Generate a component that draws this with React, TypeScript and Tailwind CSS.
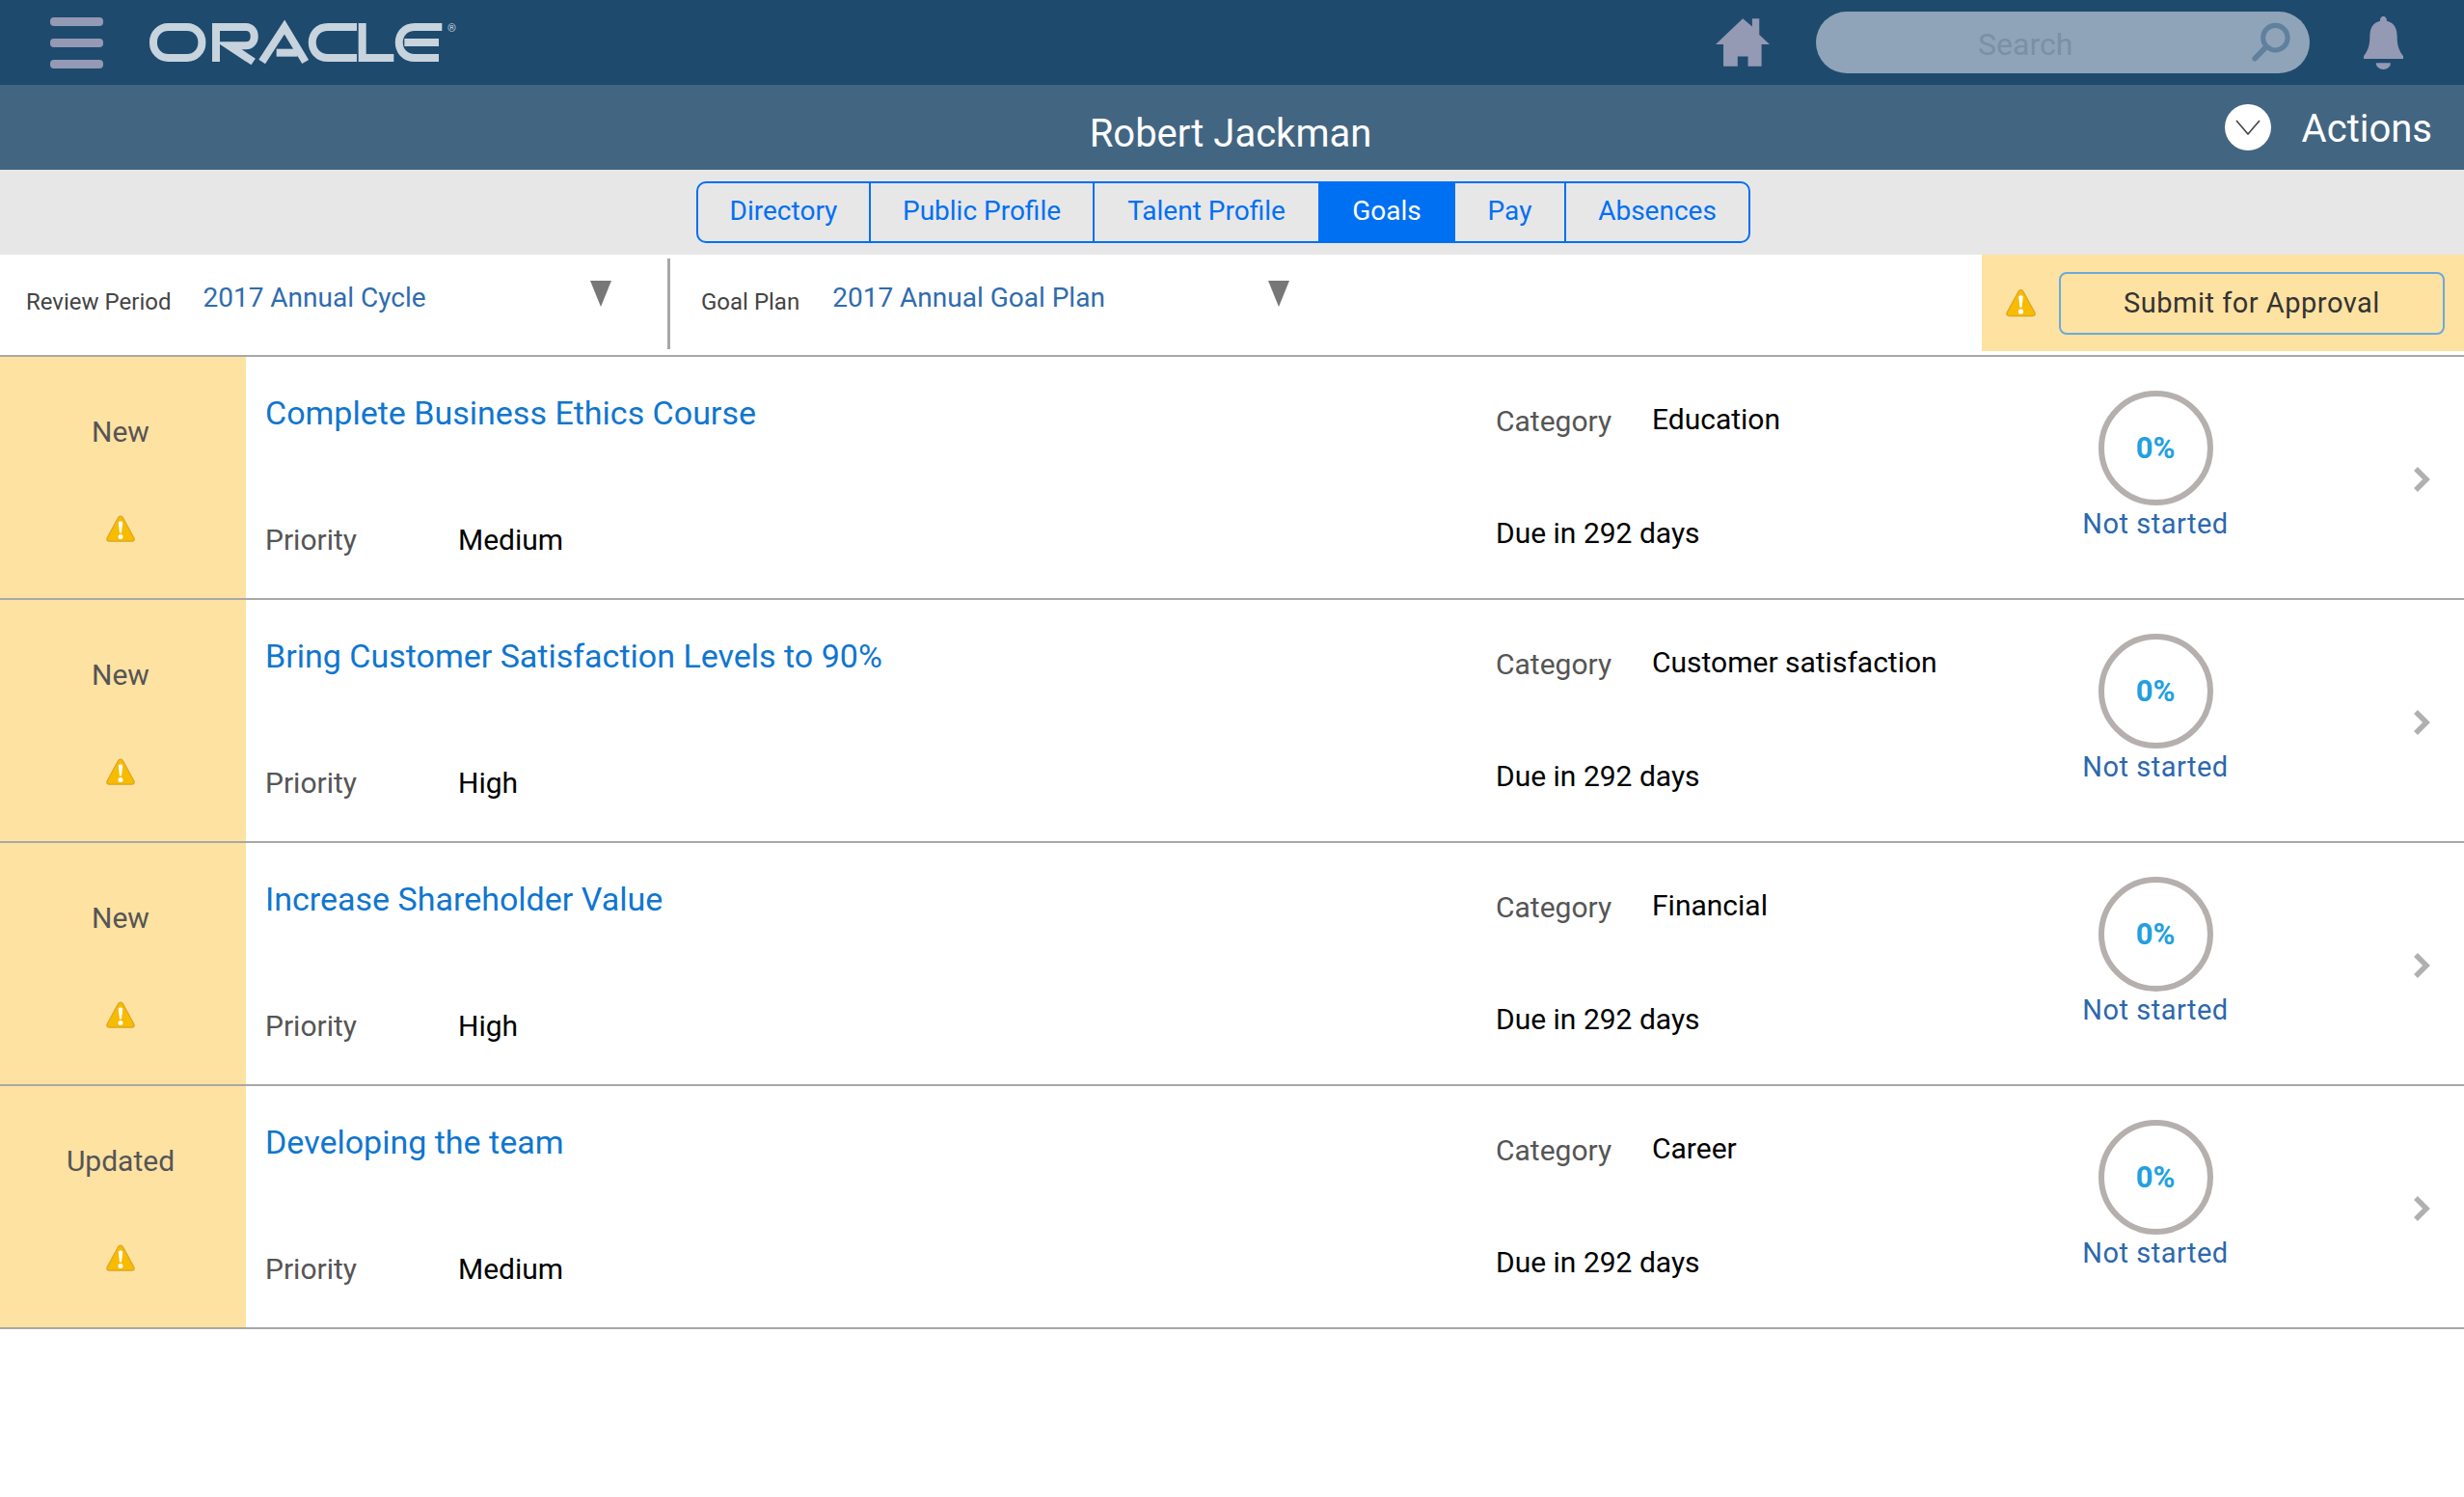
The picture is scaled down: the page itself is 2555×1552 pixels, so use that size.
import React from "react";

const Warning = ({ className }: { className: string }) => (
  <svg viewBox="0 0 30 28" className={className}>
    <path d="M15 1 C16.2 1 17 1.6 17.5 2.8 L28.8 23.5 C29.8 25.6 28.8 27.2 26.6 27.2 H3.4 C1.2 27.2 0.2 25.6 1.2 23.5 L12.5 2.8 C13 1.6 13.8 1 15 1 Z" fill="#f7bb00" stroke="#d9a62a" strokeWidth="1.2" />
    <path d="M12.8 8 C12.8 6 17.2 6 17.2 8 L16 18.5 H14 Z" fill="#ffffff" />
    <circle cx="15" cy="22.6" r="2.5" fill="#ffffff" />
  </svg>
);

const Triangle = () => (
  <svg viewBox="0 0 22 27" className="w-[22px] h-[27px]">
    <path d="M0 0 H22 L11 27 Z" fill="#777777" />
  </svg>
);

const OracleLogo = () => (
  <svg viewBox="45 15 960 150" className="w-[320px] h-[50px]" fill="none" stroke="#c7d3dd" strokeWidth="24" role="img" aria-label="Oracle">
    <rect x="57" y="42" width="151" height="96" rx="46" />
    <path d="M252 150 V42 H345 C380 42 380 100 345 100 H292 L368 150" />
    <path d="M395 150 L465 42 L530 150" strokeLinejoin="miter" />
    <path d="M440 122 H505" />
    <path d="M690 42 H600 C535 42 535 138 600 138 H690" />
    <path d="M707 30 V138 H805" />
    <path d="M955 42 H870 C805 42 805 138 870 138 H945" />
    <path d="M838 90 H945" />
    <text x="972" y="58" fontFamily="Roboto, sans-serif" fontSize="34" fill="#c7d3dd" stroke="none">®</text>
  </svg>
);

const rows = [
  { status: "New", title: "Complete Business Ethics Course", priority: "Medium", category: "Education" },
  { status: "New", title: "Bring Customer Satisfaction Levels to 90%", priority: "High", category: "Customer satisfaction" },
  { status: "New", title: "Increase Shareholder Value", priority: "High", category: "Financial" },
  { status: "Updated", title: "Developing the team", priority: "Medium", category: "Career" },
];

const tabs = [
  { label: "Directory", w: "w-[177px]" },
  { label: "Public Profile", w: "w-[232px]" },
  { label: "Talent Profile", w: "w-[234px]" },
  { label: "Goals", w: "w-[142px]", active: true },
  { label: "Pay", w: "w-[113px]" },
  { label: "Absences", w: "w-[191px]" },
];

export default function App() {
  return (
    <div className="w-[2555px] h-[1552px] bg-white font-['Roboto',sans-serif] overflow-hidden">
      <header className="h-[88px] bg-[#1e4a6e] flex items-center">
        <div className="ml-[52px] w-[55px] flex flex-col gap-[13px]">
          <div className="h-[9px] rounded-[4px] bg-[#9499b4]" />
          <div className="h-[9px] rounded-[4px] bg-[#9499b4]" />
          <div className="h-[9px] rounded-[4px] bg-[#9499b4]" />
        </div>
        <div className="ml-[48px]"><OracleLogo /></div>
        <div className="ml-[1304px]">
          <svg viewBox="58 40 167 148" className="w-[56px] h-[50px]">
            <path d="M142 40 L171 65 V40 H193 V90 L225 120 H200 V188 H158 V157 H126 V188 H82 V120 H58 Z" fill="#9499b4" />
          </svg>
        </div>
        <div className="ml-[48px] w-[512px] h-[64px] rounded-full bg-[#8fa4b8] flex items-center">
          <span className="ml-[168px] mt-[3px] text-[32px] text-[#7a90a6]">Search</span>
          <svg viewBox="100 55 130 125" className="ml-[184px] w-[44px] h-[42px]" fill="none" stroke="#60809e">
            <circle cx="178" cy="103" r="38" strokeWidth="15" />
            <path d="M148 133 L115 167" strokeWidth="17" strokeLinecap="round" />
          </svg>
        </div>
        <svg viewBox="453 35 123 165" className="ml-[56px] w-[41px] h-[55px]">
          <path d="M514 35 C506 35 504 43 504 49 C479 55 472 74 472 99 C472 129 464 144 453 159 V167 H576 V159 C565 144 557 129 557 99 C557 74 550 55 525 49 C525 43 522 35 514 35 Z" fill="#9499b4" />
          <path d="M491 180 H537 A23 20 0 0 1 491 180 Z" fill="#9499b4" />
        </svg>
      </header>

      <div className="h-[88px] bg-[#426582] grid grid-cols-[1fr_auto_1fr] items-center text-white">
        <div />
        <div className="text-[40px] leading-none pt-[14px] pr-[3px]">Robert Jackman</div>
        <div className="flex justify-end items-center pr-[33px]">
          <div className="w-[48px] h-[48px] rounded-full bg-white flex items-center justify-center">
            <svg viewBox="0 0 26 16" className="w-[26px] h-[16px]" fill="none" stroke="#444444" strokeWidth="1.6">
              <path d="M1 1 L13 15 L25 1" />
            </svg>
          </div>
          <span className="ml-[32px] mt-[3px] text-[40px] leading-none">Actions</span>
        </div>
      </div>

      <div className="h-[88px] bg-[#e7e7e7] flex items-center">
        <div className="ml-[722px] h-[64px] flex border-2 border-[#0070f3] rounded-[10px] overflow-hidden">
          {tabs.map((t, i) => (
            <div
              key={t.label}
              className={`${t.w} flex items-center justify-center text-[28px] pb-[3px] ${t.active ? "bg-[#0070f3] text-white" : "text-[#0070f3]"} ${i > 0 && i < 3 || i === 5 ? "border-l-2 border-[#0070f3]" : ""}`}
            >
              {t.label}
            </div>
          ))}
        </div>
      </div>

      <div className="h-[106px] flex border-b-2 border-[#a8a8a8]">
        <div className="w-[692px] flex items-start">
          <span className="ml-[27px] mt-[31px] text-[24px] text-[#444444]">Review Period</span>
          <span className="ml-[33px] mt-[24px] text-[28px] text-[#2f6cae]">2017 Annual Cycle</span>
          <span className="ml-[170px] mt-[27px]"><Triangle /></span>
        </div>
        <div className="mt-[4px] mb-[6px] w-[3px] bg-[#a8a8a8]" />
        <div className="flex-1 flex items-start">
          <span className="ml-[32px] mt-[31px] text-[24px] text-[#444444]">Goal Plan</span>
          <span className="ml-[34px] mt-[24px] text-[28px] text-[#2f6cae]">2017 Annual Goal Plan</span>
          <span className="ml-[169px] mt-[27px]"><Triangle /></span>
        </div>
        <div className="w-[500px] h-[100px] bg-[#fee2a2] flex items-center">
          <Warning className="ml-[25px] w-[31px] h-[30px]" />
          <div className="ml-[24px] w-[400px] h-[65px] pt-[2px] rounded-[8px] border-2 border-[#6aa9dc] flex items-center justify-center text-[29px] tracking-[0.5px] text-[#333333]">
            Submit for Approval
          </div>
        </div>
      </div>

      {rows.map((r) => (
        <div key={r.title} className="h-[252px] flex border-b-2 border-[#a8a8a8]">
          <div className="w-[255px] pr-[5px] bg-[#fee2a2] flex flex-col items-center">
            <span className="mt-[60px] text-[30px] text-[#555555] leading-[36px]">{r.status}</span>
            <Warning className="mt-[68px] w-[30px] h-[28px]" />
          </div>
          <div className="w-[1296px] pl-[20px] flex flex-col">
            <div className="mt-[37px] text-[34px] leading-[42px] text-[#0f76cf]">{r.title}</div>
            <div className="mt-[93px] flex text-[30px] leading-[36px]">
              <span className="w-[200px] text-[#555555]">Priority</span>
              <span className="text-black">{r.priority}</span>
            </div>
          </div>
          <div className="w-[560px] flex flex-col">
            <div className="mt-[49px] flex text-[30px] leading-[36px]">
              <span className="w-[162px] text-[#555555]">Category</span>
              <span className="text-black -mt-[2px]">{r.category}</span>
            </div>
            <div className="mt-[80px] text-[30px] leading-[36px] text-black">Due in 292 days</div>
          </div>
          <div className="w-[248px] flex flex-col items-center">
            <div className="mt-[35px] w-[119px] h-[119px] pt-[2px] rounded-full border-[6px] border-[#b5b0ae] flex items-center justify-center text-[31px] font-bold text-[#22a0e0]">
              0%
            </div>
            <div className="mt-[1px] text-[29px] leading-[36px] tracking-[0.5px] text-[#2c68ad]">Not started</div>
          </div>
          <div className="flex-1 flex items-start">
            <svg viewBox="0 0 18 26" className="mt-[114px] ml-[143px] w-[18px] h-[26px]" fill="none" stroke="#b0b0b0" strokeWidth="5.5">
              <path d="M3 2 L14 13 L3 24" />
            </svg>
          </div>
        </div>
      ))}
    </div>
  );
}
